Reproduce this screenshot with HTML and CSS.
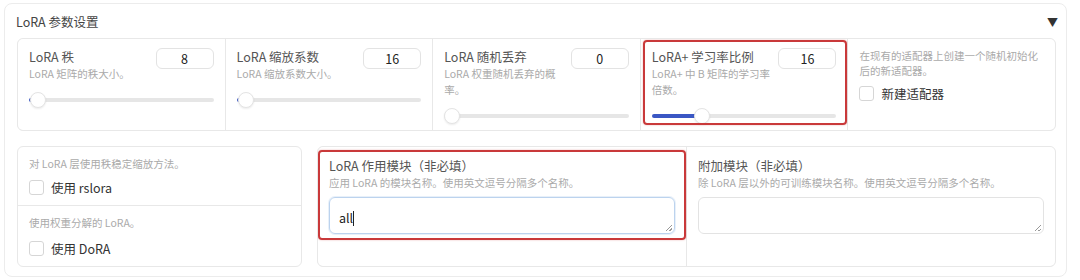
FILE: index.html
```html
<!DOCTYPE html>
<html lang="zh-CN">
<head>
  <meta charset="UTF-8">
  <title>LoRA 参数设置</title>
  <link rel="stylesheet" href="styles.css">
</head>
<body>
  <div class="card">
    <div class="card-head">
      <span class="card-title">LoRA 参数设置</span>
      <span class="caret">▼</span>
    </div>

    <!-- 第一行：数值滑块 -->
    <div class="row-sliders">
      <div class="col">
        <div class="field-head">
          <div class="field-text">
            <div class="label">LoRA 秩</div>
            <div class="info">LoRA 矩阵的秩大小。</div>
          </div>
          <input class="num" type="text" value="8">
        </div>
        <input class="range" type="range" min="1" max="1024" value="8" style="--fill: 1%">
      </div>
      <div class="col">
        <div class="field-head">
          <div class="field-text">
            <div class="label">LoRA 缩放系数</div>
            <div class="info">LoRA 缩放系数大小。</div>
          </div>
          <input class="num" type="text" value="16">
        </div>
        <input class="range" type="range" min="1" max="2048" value="16" style="--fill: 1%">
      </div>
      <div class="col">
        <div class="field-head">
          <div class="field-text">
            <div class="label">LoRA 随机丢弃</div>
            <div class="info">LoRA 权重随机丢弃的概率。</div>
          </div>
          <input class="num" type="text" value="0">
        </div>
        <input class="range" type="range" min="0" max="1" step="0.01" value="0" style="--fill: 0%">
      </div>
      <div class="col">
        <div class="field-head">
          <div class="field-text">
            <div class="label">LoRA+ 学习率比例</div>
            <div class="info">LoRA+ 中 B 矩阵的学习率倍数。</div>
          </div>
          <input class="num" type="text" value="16">
        </div>
        <input class="range" type="range" min="0" max="64" value="16" style="--fill: 25%">
        <div class="mark mark-plus"></div>
      </div>
      <div class="col">
        <div class="info">在现有的适配器上创建一个随机初始化后的新适配器。</div>
        <label class="check"><span class="box"></span>新建适配器</label>
      </div>
    </div>

    <!-- 第二行：开关与模块 -->
    <div class="row-modules">
      <div class="toggles">
        <div class="toggle">
          <div class="info">对 LoRA 层使用秩稳定缩放方法。</div>
          <label class="check"><span class="box"></span>使用 rslora</label>
        </div>
        <div class="toggle">
          <div class="info">使用权重分解的 LoRA。</div>
          <label class="check"><span class="box"></span>使用 DoRA</label>
        </div>
      </div>
      <div class="modules">
        <div class="module">
          <div class="label">LoRA 作用模块（非必填）</div>
          <div class="info">应用 LoRA 的模块名称。使用英文逗号分隔多个名称。</div>
          <div class="area focused">all<span class="cursor"></span><span class="grip"></span></div>
          <div class="mark mark-target"></div>
        </div>
        <div class="module">
          <div class="label">附加模块（非必填）</div>
          <div class="info">除 LoRA 层以外的可训练模块名称。使用英文逗号分隔多个名称。</div>
          <div class="area"><span class="grip"></span></div>
        </div>
      </div>
    </div>
  </div>
</body>
</html>
```

FILE: styles.css
```css
body {
  margin: 0;
  padding: 3px 13px 4px 4px;
  background: #fff;
  font-family: "Noto Sans CJK SC", "Noto Sans", sans-serif;
  color: #555;
}
.card {
  border: 1px solid #ececec;
  border-radius: 8px;
  padding: 0 10px 9px 11px;
  height: 263px;
  box-sizing: content-box;
}
.card-head {
  display: flex;
  justify-content: space-between;
  align-items: center;
  height: 34px;
  padding-top: 1px;
  box-sizing: border-box;
}
.card-title {
  font-size: 12.5px;
  color: #444;
}
.caret {
  font-size: 11px;
  color: #333;
  margin-right: -2px;
}
.row-sliders {
  display: grid;
  grid-template-columns: repeat(5, 1fr);
  gap: 1px;
  background: #e8e8e8;
  border: 1px solid #e8e8e8;
  border-radius: 6px;
  overflow: hidden;
  margin-left: 1px;
}
.col {
  position: relative;
  background: #fff;
  padding: 9px 11px 6px 11px;
  min-width: 0;
}
.field-head {
  display: flex;
  gap: 8px;
  align-items: flex-start;
}
.field-text {
  flex: 1;
  min-width: 0;
}
.label {
  font-size: 12.5px;
  line-height: 18px;
  color: #555;
}
.info {
  font-size: 10.5px;
  line-height: 16px;
  color: #aaa;
}
.col > .info {
  line-height: 15px;
}
.num {
  width: 58px;
  height: 21px;
  box-sizing: border-box;
  border: 1px solid #e3e3e3;
  border-radius: 6px;
  font-family: inherit;
  font-size: 12.5px;
  color: #222;
  text-align: center;
  padding: 0;
  margin: 0;
  outline: none;
}
.range {
  -webkit-appearance: none;
  appearance: none;
  display: block;
  width: 100%;
  height: 16px;
  margin: 10px 0 0 0;
  background: transparent;
}
.range::-webkit-slider-runnable-track {
  height: 4px;
  border-radius: 2px;
  background: linear-gradient(to right, #3a57c4 var(--fill), #e6e6e6 var(--fill));
}
.range::-webkit-slider-thumb {
  -webkit-appearance: none;
  width: 16px;
  height: 16px;
  margin-top: -6px;
  border-radius: 50%;
  background: #fff;
  border: 1px solid #e4e4e4;
  box-shadow: 0 1px 2px rgba(0, 0, 0, 0.08);
}
.check {
  display: flex;
  align-items: center;
  gap: 7px;
  font-size: 12.5px;
  color: #333;
  height: 22px;
}
.col > .check {
  margin-top: 4px;
}
.box {
  width: 13px;
  height: 13px;
  border: 1px solid #d6d6d6;
  border-radius: 3px;
  background: #fff;
}
.row-modules {
  display: grid;
  grid-template-columns: 285px 1fr;
  gap: 15px;
  margin-top: 15px;
  margin-left: 1px;
  height: 120px;
}
.toggles {
  border: 1px solid #e8e8e8;
  border-radius: 6px;
  display: flex;
  flex-direction: column;
}
.toggle {
  padding: 9px 11px 7px 11px;
}
.toggle + .toggle {
  border-top: 1px solid #e8e8e8;
  padding-top: 9px;
}
.toggle .check {
  margin-top: 4px;
}
.toggle + .toggle .check {
  margin-top: 6px;
}
.modules {
  display: grid;
  grid-template-columns: 1fr 1fr;
  gap: 1px;
  background: #e8e8e8;
  border: 1px solid #e8e8e8;
  border-radius: 6px;
  overflow: hidden;
}
.module {
  position: relative;
  background: #fff;
  padding: 10px 11px 0 11px;
}
.area {
  position: relative;
  height: 37px;
  box-sizing: border-box;
  margin-top: 6px;
  border: 1px solid #e3e3e3;
  border-radius: 6px;
  padding: 10px 9px 0 9px;
  font-size: 12.5px;
  color: #222;
}
.area.focused {
  border-color: #bcd3ee;
  box-shadow: 0 0 0 1px rgba(188, 211, 238, 0.35);
}
.cursor {
  display: inline-block;
  width: 1px;
  height: 15px;
  background: #222;
  vertical-align: -3px;
}
.grip {
  position: absolute;
  right: 2px;
  bottom: 2px;
  width: 6px;
  height: 6px;
  background: linear-gradient(135deg, transparent 45%, #999 45%, #999 55%, transparent 55%, transparent 75%, #999 75%, #999 85%, transparent 85%);
}
.mark {
  position: absolute;
  border: 2px solid #c9393a;
  border-radius: 4px;
  box-shadow: 0 0 2px rgba(201, 57, 58, 0.4);
  pointer-events: none;
}
.mark-plus {
  top: 1px;
  left: 2px;
  right: 0;
  bottom: 5px;
}
.mark-target {
  top: 3px;
  left: 0;
  right: 0;
  height: 86px;
}
```
